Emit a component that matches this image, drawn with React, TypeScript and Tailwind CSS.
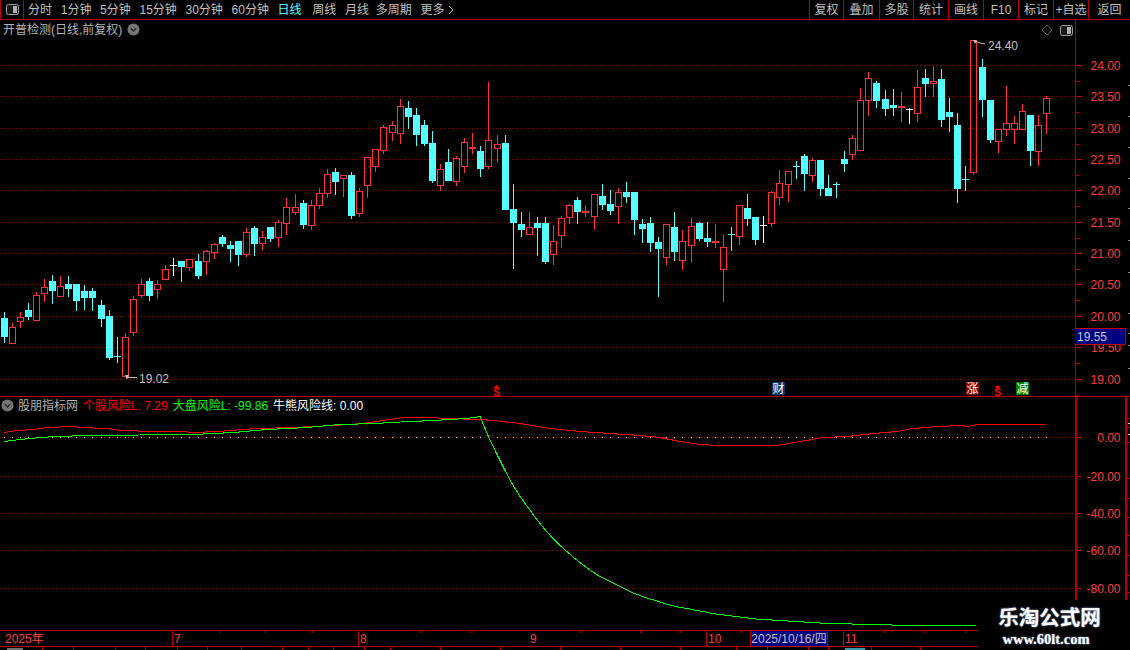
import React from "react";

type C = [number, "r" | "c" | "w", number, number, number, number];

const candles: C[] = [
  [4,"c",312,318,336,342],[12,"r",323,327,343,343],[20,"r",312,317,321,327],[28,"c",303,310,316,319],
  [36,"r",292,295,320,320],[44,"r",279,287,293,301],[52,"c",275,281,290,303],[60,"r",276,286,296,296],
  [68,"c",276,284,288,296],[76,"c",284,284,300,310],[84,"c",285,291,297,309],[92,"c",288,291,297,310],
  [101,"c",300,305,318,326],[109,"c",310,316,357,359],[117,"c",337,356,356,362],[125,"r",333,337,376,376],
  [133,"r",296,299,332,335],[141,"r",279,284,295,297],[149,"c",278,281,295,300],[157,"r",280,284,289,298],
  [165,"r",265,269,279,279],[173,"w",258,265,265,275],[181,"c",261,261,266,281],[189,"r",259,259,267,270],
  [198,"c",254,261,275,278],[206,"r",250,251,261,274],[214,"r",243,244,252,258],[222,"c",235,237,243,246],
  [230,"c",241,245,248,261],[238,"c",241,241,254,265],[246,"r",228,232,254,256],[254,"c",226,228,243,255],
  [262,"r",231,237,243,249],[270,"c",227,227,238,241],[278,"r",220,222,237,246],[286,"r",198,207,223,234],
  [295,"r",194,207,212,214],[303,"c",200,203,224,228],[311,"r",200,205,225,229],[319,"r",188,193,205,208],
  [327,"r",169,174,193,197],[335,"c",168,172,181,194],[343,"r",175,175,178,196],[351,"c",172,175,215,218],
  [359,"r",188,191,213,216],[367,"r",157,157,185,197],[375,"r",149,149,166,171],[383,"r",125,127,150,153],
  [392,"r",121,125,132,140],[400,"r",99,106,133,143],[408,"c",101,108,116,128],[416,"c",108,115,134,145],
  [424,"c",120,125,143,145],[432,"c",131,143,180,182],[440,"r",164,169,185,190],[448,"c",149,162,180,180],
  [456,"r",156,158,181,185],[464,"r",138,142,166,172],[472,"r",133,147,148,153],[480,"c",146,151,168,176],
  [488,"r",82,140,166,168],[497,"r",135,144,148,162],[505,"c",135,143,209,209],[513,"c",184,209,222,268],
  [521,"c",212,224,229,236],[529,"r",212,227,234,234],[537,"c",217,223,227,255],[545,"c",217,223,261,263],
  [553,"r",225,241,254,264],[561,"r",216,218,235,247],[569,"r",204,205,217,223],[577,"c",197,200,211,223],
  [585,"r",205,211,212,216],[594,"r",194,194,216,229],[602,"c",184,196,204,209],[610,"c",190,204,210,214],
  [618,"r",188,192,206,223],[626,"c",182,192,196,202],[634,"c",192,192,219,234],[642,"c",219,224,228,242],
  [650,"c",217,223,242,251],[658,"c",237,242,248,296],[666,"r",224,224,257,264],[674,"c",212,227,251,260],
  [682,"r",230,241,260,269],[691,"r",218,226,245,262],[699,"c",222,223,238,240],[707,"c",222,238,241,246],
  [715,"r",224,241,241,247],[723,"r",235,247,269,301],[731,"c",227,234,234,250],[739,"r",205,205,236,244],
  [747,"c",194,208,218,225],[755,"c",217,217,239,244],[763,"w",216,225,225,242],[771,"r",191,192,223,226],
  [779,"r",170,183,197,204],[788,"r",171,171,184,201],[796,"c",161,166,166,178],[804,"c",154,156,173,190],
  [812,"r",158,160,175,181],[820,"c",160,160,188,195],[828,"c",175,188,195,195],[836,"c",182,184,184,197],
  [844,"c",151,159,163,171],[852,"r",135,138,154,159],[860,"r",88,100,150,150],[868,"r",72,78,100,115],
  [876,"c",81,83,100,107],[885,"c",90,99,108,115],[893,"c",89,105,107,115],[901,"r",92,106,107,121],
  [909,"w",108,109,109,123],[917,"r",70,87,113,121],[925,"c",69,78,83,96],[933,"r",66,81,83,96],
  [941,"c",69,79,119,126],[949,"c",98,112,116,131],[957,"c",113,125,188,202],[965,"c",166,179,179,190],
  [973,"r",40,40,172,174],[982,"c",59,67,99,116],[990,"c",100,100,139,142],[998,"r",129,129,141,152],
  [1006,"r",86,123,129,135],[1014,"r",116,123,129,143],[1022,"r",104,111,129,129],[1030,"c",115,115,150,165],
  [1038,"r",115,125,151,165],[1046,"r",96,98,113,133],
];

const RED = "#ff3232";
const CYAN = "#54ffff";
const LINE = "#b80000";
const GRID = "#860000";

const priceTicks: [string, number][] = [
  ["24.00",65],["23.50",96],["23.00",128],["22.50",159],["22.00",190],["21.50",222],
  ["21.00",253],["20.50",284],["20.00",316],["19.50",347],["19.00",379],
];
const indTicks: [string, number][] = [["0.00",437],["-20.00",476],["-40.00",513],["-60.00",550],["-80.00",588]];

const redLine: [number, number][] = [
  [4,432],[17,430],[33,429],[48,427],[73,426],[80,427],[107,428],[122,430],[153,431],[183,431],[193,432],
  [217,431],[257,428],[293,427],[333,425],[363,423],[383,420],[403,417],[428,417],[447,418],[480,419],[493,420],
  [520,423],[550,428],[580,431],[610,433],[640,435],[660,437],[680,441],[700,444],[720,445],[775,445],[783,444],
  [800,441],[823,437],[847,436],[873,433],[897,431],[913,428],[937,426],[962,425],[967,426],[978,424],[1046,424],
];
const greenHead: [number, number][] = [
  [4,441],[20,439],[40,437],[57,436],[87,435],[193,434],[233,432],[267,429],[307,427],[340,424],[377,423],
  [390,422],[433,420],[467,418],[480,416],
];
const greenTail: [number, number][] = [];
for (let x = 488; x <= 977; x += 8) {
  greenTail.push([x, Math.round(626 - 210 * Math.exp(-(x - 480) / 84))]);
}
const pts = (a: [number, number][]) => a.map((p) => `${p[0]},${p[1] + 0.5}`).join(" ");

function Candle({ c }: { c: C }) {
  const [x, k, hi, top, bot, lo] = c;
  const col = k === "r" ? RED : k === "c" ? CYAN : "#ffffff";
  const doji = bot - top <= 1 && k !== "r";
  return (
    <g>
      <rect x={x} y={hi} width={1} height={top - hi} fill={col} />
      <rect x={x} y={bot} width={1} height={lo - bot + 1} fill={col} />
      {doji ? (
        <rect x={x - 3} y={top} width={7} height={1} fill={col} />
      ) : k === "r" ? (
        <rect x={x - 2.5} y={top + 0.5} width={6} height={Math.max(bot - top, 1)} fill="none" stroke={col} />
      ) : (
        <rect x={x - 3} y={top} width={7} height={bot - top + 1} fill={col} />
      )}
    </g>
  );
}

function GridLine({ y }: { y: number }) {
  return <line x1={0} x2={1075} y1={y + 0.5} y2={y + 0.5} stroke={GRID} strokeDasharray="1 3" />;
}

function CircleChevron() {
  return (
    <svg width="13" height="13" viewBox="0 0 13 13" className="block flex-none">
      <circle cx="6.5" cy="6.5" r="6" fill="#757575" />
      <path d="M3.8 5.2 L6.5 8 L9.2 5.2" fill="none" stroke="#2a2a2a" strokeWidth="1.3" />
    </svg>
  );
}

function ToggleIcon() {
  return (
    <svg width="13" height="11" viewBox="0 0 13 11" className="block">
      <rect x="0.5" y="0.5" width="12" height="10" rx="2" fill="#1a1a1a" stroke="#a0a0a0" />
      <rect x="7" y="2" width="4" height="7" fill="#b0b0b0" />
    </svg>
  );
}

function Dollar({ className }: { className: string }) {
  return (
    <span className={`absolute flex flex-col items-center ${className}`}>
      <svg width="7" height="3" viewBox="0 0 7 3" className="block">
        <path d="M3.5 0 L6.5 3 L0.5 3 Z" fill="#ff0000" />
      </svg>
      <span className="text-[10px] leading-[9px] font-bold text-[#ff0000]">S</span>
    </span>
  );
}

const nav: [string, string][] = [
  ["分时",""],["1分钟",""],["5分钟",""],["15分钟",""],["30分钟",""],["60分钟",""],
  ["日线","text-[#54ffff]"],["周线","ml-[2px]"],["月线",""],["多周期","ml-[-2px]"],
];
const rightBtns: [string, string][] = [
  ["复权","w-[34px]"],["叠加","w-[36px]"],["多股","w-[34px]"],["统计","w-[35px]"],["画线","w-[35px]"],
  ["F10","w-[35px]"],["标记","w-[35px]"],["+自选","w-[35px]"],["返回","w-[41px]"],
];
const topTicks = [219,265,312,420,470,580,640,680,740,884,924,965];
const botTicks = [42,73,115,145,177,207,241,282,308,333,364,390,440,500,560,620,680,736,767,808,828,871,920];

export default function App() {
  return (
    <div className="relative w-[1130px] h-[650px] overflow-hidden bg-black text-[12px] leading-none text-[#c0c0c0] [font-family:'Liberation_Sans','Noto_Sans_CJK_SC',sans-serif]">
      {/* toolbar */}
      <div className="flex h-[20px] items-center border-b border-[#b80000]">
        <div className="flex h-full w-[24px] flex-none items-center justify-center border-x border-[#b80000]">
          <ToggleIcon />
        </div>
        <div className="ml-[4px] flex items-center gap-[8.7px] whitespace-nowrap">
          {nav.map(([t, c]) => (
            <span key={t} className={c}>{t}</span>
          ))}
          <span className="flex items-center gap-[4px]">
            更多
            <svg width="6" height="10" viewBox="0 0 6 10" className="block">
              <path d="M1 1 L5 5 L1 9" fill="none" stroke="#c0c0c0" />
            </svg>
          </span>
        </div>
        <div className="ml-auto flex h-full border-l border-[#b80000]">
          {rightBtns.map(([t, w], i) => (
            <div key={t} className={`flex h-full items-center justify-center whitespace-nowrap ${w} ${i < 8 ? "border-r border-[#b80000]" : ""}`}>
              {t}
            </div>
          ))}
        </div>
      </div>

      {/* main chart */}
      <div className="flex h-[377px] border-b border-[#b80000]">
        <div className="relative h-full w-[1075px] flex-none">
          <svg width="1075" height="376" viewBox="0 20 1075 376" shapeRendering="crispEdges" className="block">
            {priceTicks.map(([, y]) => <GridLine key={y} y={y} />)}
            {candles.map((c) => <Candle key={c[0]} c={c} />)}
            <g shapeRendering="auto">
              <path d="M973 40 L977 40 L975 44 Z" fill="#c0c0c0" />
              <path d="M975 41 L980 43 L985 44" fill="none" stroke="#c0c0c0" />
              <text x="988" y="50" fontSize="12" fill="#c0c0c0">24.40</text>
              <path d="M125 375 L129 375 L127 380 Z" fill="#c0c0c0" />
              <path d="M127 377.5 L137 377.5" fill="none" stroke="#c0c0c0" />
              <text x="139" y="383" fontSize="12" fill="#c0c0c0">19.02</text>
            </g>
          </svg>
          <div className="absolute left-[3px] top-[3px] flex items-center gap-[5px] text-[#b4b4b4]">
            <span className="whitespace-nowrap">开普检测(日线,前复权)</span>
            <CircleChevron />
          </div>
          <div className="absolute left-[1041px] top-[4px] flex items-center gap-[1px]">
            <svg width="12" height="12" viewBox="0 0 12 12" className="block">
              <path d="M6 1 L11 6 L6 11 L1 6 Z" fill="none" stroke="#666666" />
            </svg>
            <span className="ml-[6px]"><ToggleIcon /></span>
          </div>
          <Dollar className="left-[493px] top-[365px]" />
          <span className="absolute left-[772px] top-[362px] flex h-[13px] w-[13px] items-center justify-center bg-[#0a3a70] text-[12px] text-white">财</span>
          <span className="absolute left-[966px] top-[362px] flex h-[13px] w-[13px] items-center justify-center bg-[#800000] text-[12px] text-white">涨</span>
          <Dollar className="left-[994px] top-[365px]" />
          <span className="absolute left-[1016px] top-[362px] flex h-[13px] w-[13px] items-center justify-center bg-[#008000] text-[12px] text-white">减</span>
        </div>
        <div className="relative h-full flex-1">
          <svg width="55" height="376" viewBox="1075 20 55 376" shapeRendering="crispEdges" className="block">
            <rect x="1075" y="20" width="1" height="376" fill={LINE} />
            {priceTicks.map(([t, y]) => (
              <g key={t}>
                <rect x="1076" y={y} width="6" height="1" fill={LINE} />
                <rect x="1076" y={y + 16} width="3" height="1" fill={LINE} />
                {t !== "19.50" && (
                  <text x="1120.5" y={y + 4.5} fontSize="12" fill="#ff3c3c" textAnchor="end" shapeRendering="auto">{t}</text>
                )}
              </g>
            ))}
            {[85,116,147,178,208,240,272,313,333,345,368].map((y) => (
              <rect key={y} x="1128" y={y} width="2" height="1" fill="#8a8a8a" />
            ))}
          </svg>
          <span className="absolute left-[16px] top-[322px] text-[#ff3c3c]">19.50</span>
          <div className="absolute left-0 top-[308px] flex h-[17px] w-[51px] items-center border-y border-r border-[#c00000] bg-[#000080] pl-[2px] text-[#c8c8c8]">
            19.55
          </div>
        </div>
      </div>

      {/* indicator */}
      <div className="flex h-[233px]">
        <div className="relative h-full w-[1075px] flex-none">
          <svg width="1075" height="233" viewBox="0 397 1075 233" shapeRendering="crispEdges" className="block">
            {indTicks.map(([, y]) => <GridLine key={y} y={y} />)}
            {candles.map((c) => <rect key={c[0]} x={c[0]} y={437} width={1} height={1} fill="#ffffff" />)}
            <polyline points={pts(redLine)} fill="none" stroke="#ff0000" />
            <polyline points={pts(greenHead)} fill="none" stroke="#00ff00" />
            <polyline points={pts([[480,416],...greenTail])} fill="none" stroke="#00ff00" />
          </svg>
          <div className="absolute left-[1px] top-[2px] flex items-center whitespace-nowrap">
            <CircleChevron />
            <span className="ml-[4px] text-[#b4b4b4]">股朋指标网</span>
            <span className="ml-[5px] text-[#ff0000]">个股风险L: 7.29</span>
            <span className="ml-[5px] text-[#00ff00]">大盘风险L: -99.86</span>
            <span className="ml-[5px] text-white">牛熊风险线: 0.00</span>
          </div>
        </div>
        <div className="relative h-full flex-1">
          <svg width="55" height="233" viewBox="1075 397 55 233" shapeRendering="crispEdges" className="block">
            <rect x="1075" y="397" width="2" height="203" fill={LINE} />
            <rect x="1125" y="397" width="2" height="203" fill={LINE} />
            {indTicks.map(([t, y]) => (
              <g key={t}>
                <rect x="1077" y={y} width="5" height="1" fill={LINE} />
                <text x="1120.5" y={y + 4.5} fontSize="12" fill="#ff3c3c" textAnchor="end" shapeRendering="auto">{t}</text>
              </g>
            ))}
            {[418,427,442,478,498,517,535,555,575,592].map((y) => (
              <rect key={y} x="1128" y={y} width="2" height="1" fill={LINE} />
            ))}
            {[423,434].map((y) => (
              <rect key={y} x="1128" y={y} width="2" height="1" fill="#d0d0d0" />
            ))}
          </svg>
        </div>
      </div>

      {/* time axis */}
      <div className="relative flex h-[17px] items-center border-y border-[#b80000] text-[#ff3c3c]">
        <div className="flex h-full w-[172px] items-center pl-[5px]">2025年</div>
        <div className="flex h-full w-[186px] items-center border-l border-[#b80000] pl-[1px]">7</div>
        <div className="flex h-full w-[170px] items-center border-l border-[#b80000] pl-[1px]">8</div>
        <div className="flex h-full w-[178px] items-center pl-[2px]">9</div>
        <div className="flex h-full w-[44px] items-center border-l border-[#b80000] pl-[1px]">10</div>
        <div className="flex h-full w-[78px] items-center justify-center whitespace-nowrap border-x border-[#b80000] bg-[#000080] text-[#c0c0c0]">2025/10/16/四</div>
        <div className="h-full w-[15px]" />
        <div className="flex h-full items-center border-l border-[#b80000] pl-[1px]">11</div>
        {topTicks.map((x) => (
          <span key={x} className="absolute top-0 h-[2px] w-[1px] bg-[#b80000]" style={{ left: x }} />
        ))}
      </div>

      {/* strip under the axis */}
      <div className="relative h-[3px]">
        {botTicks.map((x) => (
          <span key={x} className="absolute top-0 h-[3px] w-[1px] bg-[#b80000]" style={{ left: x }} />
        ))}
        <span className="absolute left-[7px] top-[1px] h-[2px] w-[16px] bg-[#707070]" />
        <span className="absolute left-[845px] top-[1px] h-[2px] w-[20px] bg-[#3a9aa8]" />
      </div>

      {/* watermark */}
      <div className="absolute right-0 top-[600px] flex h-[50px] w-[152px] flex-col items-center bg-black pt-[6px] pr-[9px] text-white [font-family:'Liberation_Serif','Noto_Sans_CJK_SC',serif] [text-shadow:0_0_2px_#a0c0ff]">
        <span className="text-[20.5px] leading-[25px] font-bold whitespace-nowrap">乐淘公式网</span>
        <span className="mt-[1px] mr-[7px] text-[14.5px] leading-[14px] font-bold whitespace-nowrap">www.60lt.com</span>
      </div>
    </div>
  );
}
